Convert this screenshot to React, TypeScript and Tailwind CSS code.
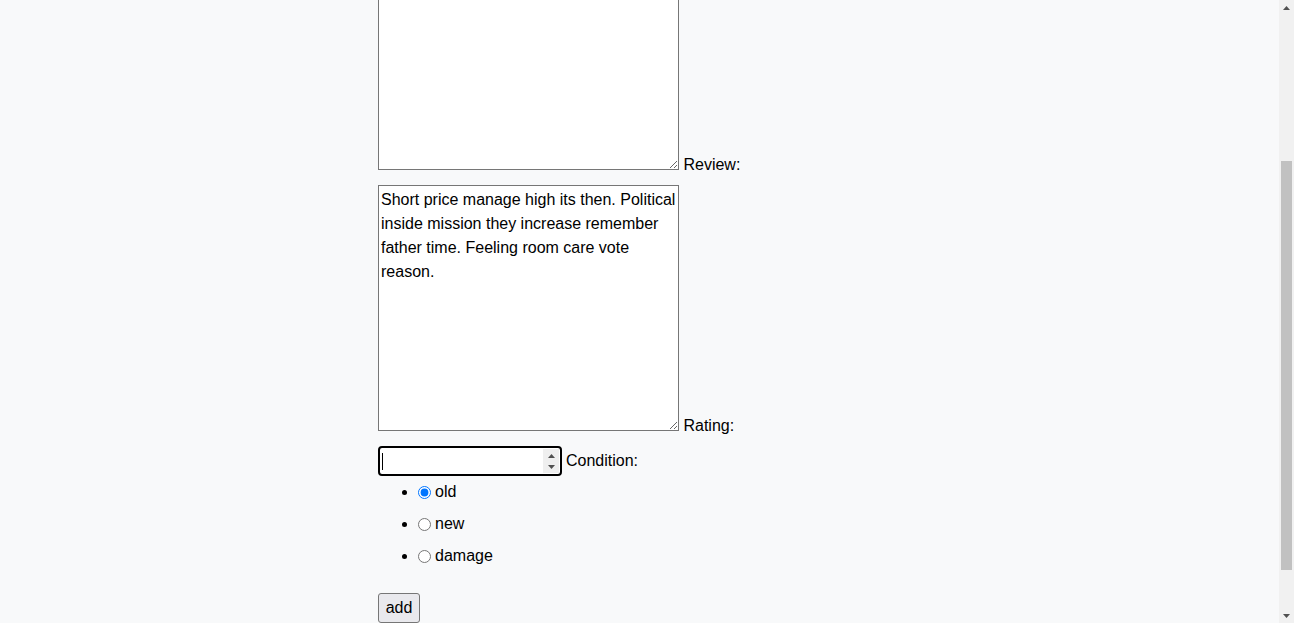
import React from "react";

function Scrollbar() {
  return (
    <div className="flex h-[623px] w-[15px] shrink-0 flex-col bg-[#f1f1f1]">
      <div className="flex h-[15px] items-center justify-center">
        <svg width="7" height="4" viewBox="0 0 7 4">
          <path d="M3.5 0 L7 4 L0 4 Z" fill="#505050" />
        </svg>
      </div>
      <div className="flex-1 px-[2px]">
        <div className="mt-[146px] h-[409px] bg-[#c1c1c1]" />
      </div>
      <div className="flex h-[15px] items-center justify-center">
        <svg width="7" height="4" viewBox="0 0 7 4">
          <path d="M0 0 L7 0 L3.5 4 Z" fill="#505050" />
        </svg>
      </div>
    </div>
  );
}

function NumberField() {
  return (
    <div className="flex h-[30px] w-[184px] rounded-[4px] border-2 border-black bg-white">
      <span className="ml-[2px] h-[17px] w-px self-center bg-black" />
      <input
        type="number"
        aria-label="Rating"
        className="min-w-0 flex-1 bg-transparent px-0 leading-6 outline-none [appearance:textfield] [&::-webkit-inner-spin-button]:appearance-none [&::-webkit-outer-spin-button]:appearance-none"
      />
      <div className="my-[1px] mr-px flex w-[16px] flex-col items-center justify-center gap-[7px] bg-[#efefef]">
        <svg width="7" height="4" viewBox="0 0 7 4">
          <path d="M3.5 0 L7 4 L0 4 Z" fill="#505050" />
        </svg>
        <svg width="7" height="4" viewBox="0 0 7 4">
          <path d="M0 0 L7 0 L3.5 4 Z" fill="#505050" />
        </svg>
      </div>
    </div>
  );
}

export default function App() {
  return (
    <div className="flex h-[623px] overflow-hidden bg-[#f8f9fa] font-['Liberation_Sans',Arial,sans-serif] text-base text-black">
      <div className="h-[623px] flex-1 overflow-hidden">
        <form
          className="mx-auto w-[523px]"
          onSubmit={(e) => e.preventDefault()}
        >
          <div className="-mt-[76px] leading-[17px]">
            <textarea
              rows={10}
              aria-label="Description"
              className="inline-block h-[246px] w-[301px] border border-[#767676] bg-white p-[2px] align-baseline leading-6"
            />{" "}
            <span>Review:</span>
          </div>

          <div className="mt-3 leading-[17px]">
            <textarea
              rows={10}
              aria-label="Review"
              className="inline-block h-[246px] w-[301px] border border-[#767676] bg-white p-[2px] align-baseline leading-6"
              defaultValue="Short price manage high its then. Political inside mission they increase remember father time. Feeling room care vote reason."
            />{" "}
            <span>Rating:</span>
          </div>

          <div className="mt-3 flex h-[30px] items-center gap-1">
            <NumberField />
            <span className="leading-6">Condition:</span>
          </div>

          <ul className="list-disc pl-10">
            {["old", "new", "damage"].map((c) => (
              <li key={c} className="h-8 leading-8">
                <label>
                  <input
                    type="radio"
                    name="condition"
                    value={c}
                    defaultChecked={c === "old"}
                    className="m-0 mr-1 align-middle"
                  />
                  {c}
                </label>
              </li>
            ))}
          </ul>

          <button
            type="submit"
            className="mt-[21px] h-[30px] w-[42px] rounded-[3px] border border-[#767676] bg-[#e9e9ed] leading-6"
          >
            add
          </button>
        </form>
      </div>
      <Scrollbar />
    </div>
  );
}
